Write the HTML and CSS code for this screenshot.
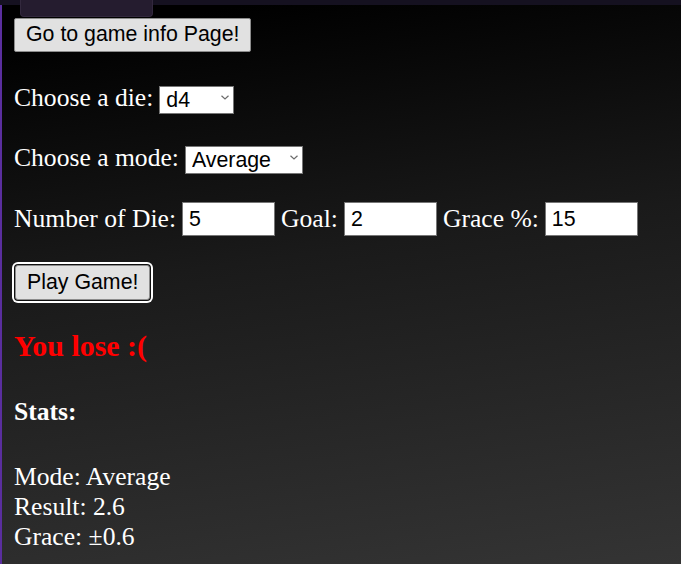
FILE: index.html
```html
<!DOCTYPE html>
<html lang="en">
<head>
<meta charset="utf-8">
<title>Dice Game</title>
<link rel="stylesheet" href="styles.css">
</head>
<body>
<div class="topbar"></div>
<div class="tab"></div>
<main class="page">
  <button class="btn btn-info" type="button">Go to game info Page!</button>

  <div class="row row-die">
    <label for="die">Choose a die:</label>
    <span class="select-wrap">
      <select id="die" class="select select-die">
        <option>d4</option>
        <option>d6</option>
        <option>d8</option>
        <option>d10</option>
        <option>d12</option>
        <option>d20</option>
      </select>
      <svg class="chev" width="8" height="5" viewBox="0 0 8 5"><path d="M0.5 0.8 L4 4 L7.5 0.8" fill="none" stroke="#6b6b6b" stroke-width="1.2"/></svg>
    </span>
  </div>

  <div class="row row-mode">
    <label for="mode">Choose a mode:</label>
    <span class="select-wrap">
      <select id="mode" class="select select-mode">
        <option>Average</option>
        <option>Sum</option>
      </select>
      <svg class="chev" width="8" height="5" viewBox="0 0 8 5"><path d="M0.5 0.8 L4 4 L7.5 0.8" fill="none" stroke="#6b6b6b" stroke-width="1.2"/></svg>
    </span>
  </div>

  <div class="row row-inputs">
    <label for="num">Number of Die:</label>
    <input id="num" class="field" type="text" value="5">
    <label for="goal">Goal:</label>
    <input id="goal" class="field" type="text" value="2">
    <label for="grace">Grace %:</label>
    <input id="grace" class="field" type="text" value="15">
  </div>

  <div class="row row-play">
    <button class="btn btn-play" type="button">Play Game!</button>
  </div>

  <h3 class="result">You lose :(</h3>
  <h4 class="stats-title">Stats:</h4>
  <div class="stats">
    <div class="stat">Mode: Average</div>
    <div class="stat">Result: 2.6</div>
    <div class="stat">Grace: ±0.6</div>
  </div>
</main>
</body>
</html>
```
FILE: styles.css
```css
html, body {
  margin: 0;
  padding: 0;
  height: 100%;
}

body {
  background: linear-gradient(172deg, #000 6%, #1a1a1a 45%, #343434 100%);
  font-family: "Liberation Serif", "Times New Roman", serif;
  font-size: 25.6px;
  color: #fff;
  overflow: hidden;
  position: relative;
}

.topbar {
  height: 5px;
  background: #151120;
}

.tab {
  position: absolute;
  left: 20px;
  top: 0;
  width: 131px;
  height: 16px;
  background: #251c2f;
  border: 1px solid #32283d;
  border-top: none;
  border-radius: 0 0 4px 4px;
}

.page {
  border-left: 2px solid #5a2e9e;
  padding-left: 12px;
  min-height: calc(100% - 5px);
  display: flex;
  flex-direction: column;
  align-items: flex-start;
}

.btn {
  font-family: "Liberation Sans", Arial, sans-serif;
  font-size: 21.33px;
  color: #000;
  background: #e1e1e1;
  border: 1px solid #8c8c8c;
  border-radius: 2px;
  padding: 0 11px;
  margin: 0;
  line-height: 1;
}

.btn-info {
  margin-top: 13px;
  height: 34px;
}

.row {
  display: flex;
  align-items: center;
  column-gap: 6px;
  line-height: 30px;
}

.row-die {
  margin-top: 32px;
  height: 28px;
}

.row-mode {
  margin-top: 32px;
  height: 28px;
}

.row-inputs {
  margin-top: 30px;
  height: 34px;
}

.row-play {
  margin-top: 29px;
  height: 35px;
}

.select-wrap {
  position: relative;
  display: inline-block;
  height: 28px;
}

.select {
  appearance: none;
  -webkit-appearance: none;
  font-family: "Liberation Sans", Arial, sans-serif;
  font-size: 21.33px;
  color: #000;
  background: #fff;
  border: 1px solid #767676;
  border-radius: 0;
  height: 28px;
  padding: 0 0 0 6px;
  margin: 0;
  box-sizing: border-box;
}

.select-die {
  width: 75px;
}

.select-mode {
  width: 118px;
}

.chev {
  position: absolute;
  right: 5px;
  top: 11px;
  pointer-events: none;
}

.field {
  font-family: "Liberation Sans", Arial, sans-serif;
  font-size: 21.33px;
  color: #000;
  background: #fff;
  border: 1px solid #767676;
  border-radius: 0;
  width: 93px;
  height: 34px;
  padding: 0 6px;
  margin: 0;
  box-sizing: border-box;
}

.btn-play {
  height: 35px;
  margin-left: 1px;
  border-radius: 3px;
  box-shadow: 0 0 0 1px #101010, 0 0 0 3px #fff;
}

.result {
  margin: 29px 0 0;
  font-size: 29.95px;
  line-height: 34px;
  font-weight: bold;
  color: #f00;
}

.stats-title {
  margin: 34px 0 0;
  font-size: 25.6px;
  line-height: 30px;
  font-weight: bold;
}

.stats {
  margin-top: 35px;
}

.stat {
  line-height: 30px;
}
```
